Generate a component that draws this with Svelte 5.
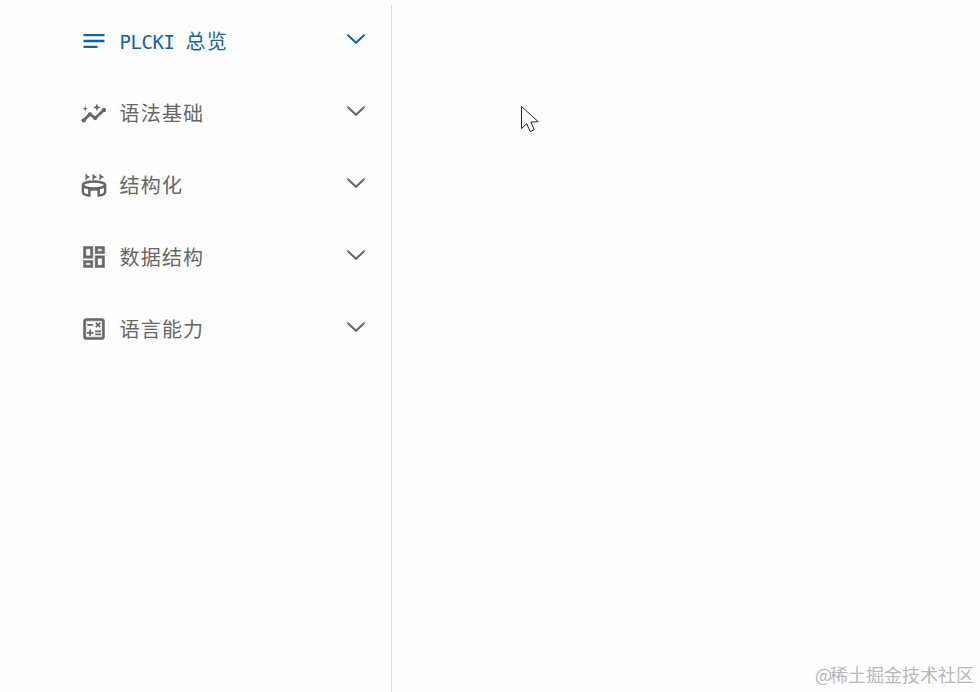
<script lang="ts">
	const items = [
		{ key: 'notes', latin: 'PLCKI', label: '总览', active: true },
		{ key: 'graph', label: '语法基础' },
		{ key: 'stadium', label: '结构化' },
		{ key: 'dashboard', label: '数据结构' },
		{ key: 'calculate', label: '语言能力' }
	];
</script>

<div class="page">
	<nav class="sidebar">
		{#each items as item}
			<div class="row" class:active={item.active}>
				<svg class="icon" viewBox="0 0 24 24" fill="currentColor">
					{#if item.key === 'notes'}
						<path d="M3 18h12v-2H3v2zM3 6v2h18V6H3zm0 7h18v-2H3v2z" />
					{:else if item.key === 'graph'}
						<path d="M3 18.500l5.500-5.500 4.500 3.500 7.500-7" fill="none" stroke="currentColor" stroke-width="2.400" />
						<circle cx="3.200" cy="18.300" r="1.900" />
						<circle cx="8.500" cy="13" r="1.700" />
						<circle cx="13" cy="16.500" r="1.700" />
						<circle cx="20.500" cy="9.500" r="1.900" />
						<path d="M14.500 10.500l-.9-2.400-2.400-.9 2.400-.9.900-2.400.9 2.400 2.400.9-2.400.9z" />
						<path d="M4.500 10.500l-.6-1.600-1.600-.6 1.600-.6.6-1.600.6 1.600 1.600.6-1.600.6z" />
					{:else if item.key === 'stadium'}
						<path d="M5.500 2.500h1v1l3 1.600-3 1.600v1h-1zM11.500 2.500h1v1l3 1.600-3 1.600v1h-1zM17.500 2.500h1v1l3 1.600-3 1.600v1h-1z" transform="translate(-.8 0)" />
						<g fill="none" stroke="currentColor" stroke-width="2.100">
							<ellipse cx="12" cy="12" rx="9.500" ry="3" />
							<path d="M2.500 12v6c0 1.700 2.700 2.800 5.500 3v-4.800c2.600-.6 5.400-.6 8 0V21c2.800-.2 5.500-1.300 5.500-3v-6" />
						</g>
					{:else if item.key === 'dashboard'}
						<path d="M19 5v2h-4V5h4M9 5v6H5V5h4m10 8v6h-4v-6h4M9 17v2H5v-2h4M21 3h-8v6h8V3zM11 3H3v10h8V3zm10 8h-8v10h8V11zM11 15H3v6h8v-6z" stroke="currentColor" stroke-width=".4" />
					{:else}
						<path d="M19 3H5c-1.100 0-2 .9-2 2v14c0 1.100.9 2 2 2h14c1.100 0 2-.9 2-2V5c0-1.100-.9-2-2-2zm0 16H5V5h14v14z" stroke="currentColor" stroke-width=".4" />
						<path d="M6.250 7.720h5v1.500h-5zM13 15.750h5v1.500h-5zm0-2.500h5v1.500h-5zM8 18h1.500v-2h2v-1.500h-2v-2H8v2H6V16h2zm6.090-7.050l1.410-1.410 1.410 1.410 1.060-1.060-1.410-1.420 1.410-1.410L16.970 6 15.500 7.410 14.090 6l-1.060 1.060 1.410 1.410-1.410 1.420z" />
					{/if}
				</svg>
				<span class="label">
					{#if item.latin}<span class="latin">{item.latin}</span>{/if}{item.label}
				</span>
				<svg class="chevron" viewBox="0 0 20 12" fill="none" stroke="currentColor" stroke-width="2">
					<path d="M1.500 1.800L10 9.800l8.500-8" />
				</svg>
			</div>
		{/each}
	</nav>

	<svg class="cursor" viewBox="0 0 20 28" width="20" height="28">
		<path d="M1.500 1.500v22l5.300-4.800 3.300 7.800 4.200-1.800-3.400-7.600 7.300-.4z" fill="#fff" stroke="#222" stroke-width="1" />
	</svg>

	<div class="watermark"><span class="at">@</span>稀土掘金技术社区</div>
</div>

<style>
	:global(body) {
		background: #fefefe;
	}

	.page {
		height: 692px;
		overflow: hidden;
		padding-top: 5px;
		box-sizing: border-box;
	}

	.sidebar {
		width: 392px;
		height: 687px;
		box-sizing: border-box;
		border-right: 1px solid #dedede;
		padding: 0 25px 0 80px;
		font-family: 'Noto Sans CJK SC', 'Noto Sans', sans-serif;
	}

	.row {
		display: flex;
		align-items: center;
		height: 72px;
		color: #666666;
	}

	.row.active {
		color: #16629f;
	}

	.icon {
		width: 28px;
		height: 28px;
		flex-shrink: 0;
	}

	.label {
		flex: 1;
		margin-left: 11.500px;
		font-size: 20px;
		letter-spacing: 1.200px;
		line-height: 28px;
	}

	.latin {
		font-family: 'DejaVu Sans Mono', monospace;
		font-size: 19px;
		letter-spacing: -0.440px;
		margin-right: 11px;
	}

	.chevron {
		width: 20px;
		height: 12px;
		margin-top: -4px;
		flex-shrink: 0;
	}

	.cursor {
		position: absolute;
		left: 520px;
		top: 105px;
	}

	.watermark {
		position: absolute;
		right: 6px;
		bottom: 5px;
		font-family: 'Noto Sans CJK SC', sans-serif;
		font-size: 18px;
		line-height: 26px;
		color: #b8b8b8;
	}

	.at {
		letter-spacing: -2px;
	}
</style>
